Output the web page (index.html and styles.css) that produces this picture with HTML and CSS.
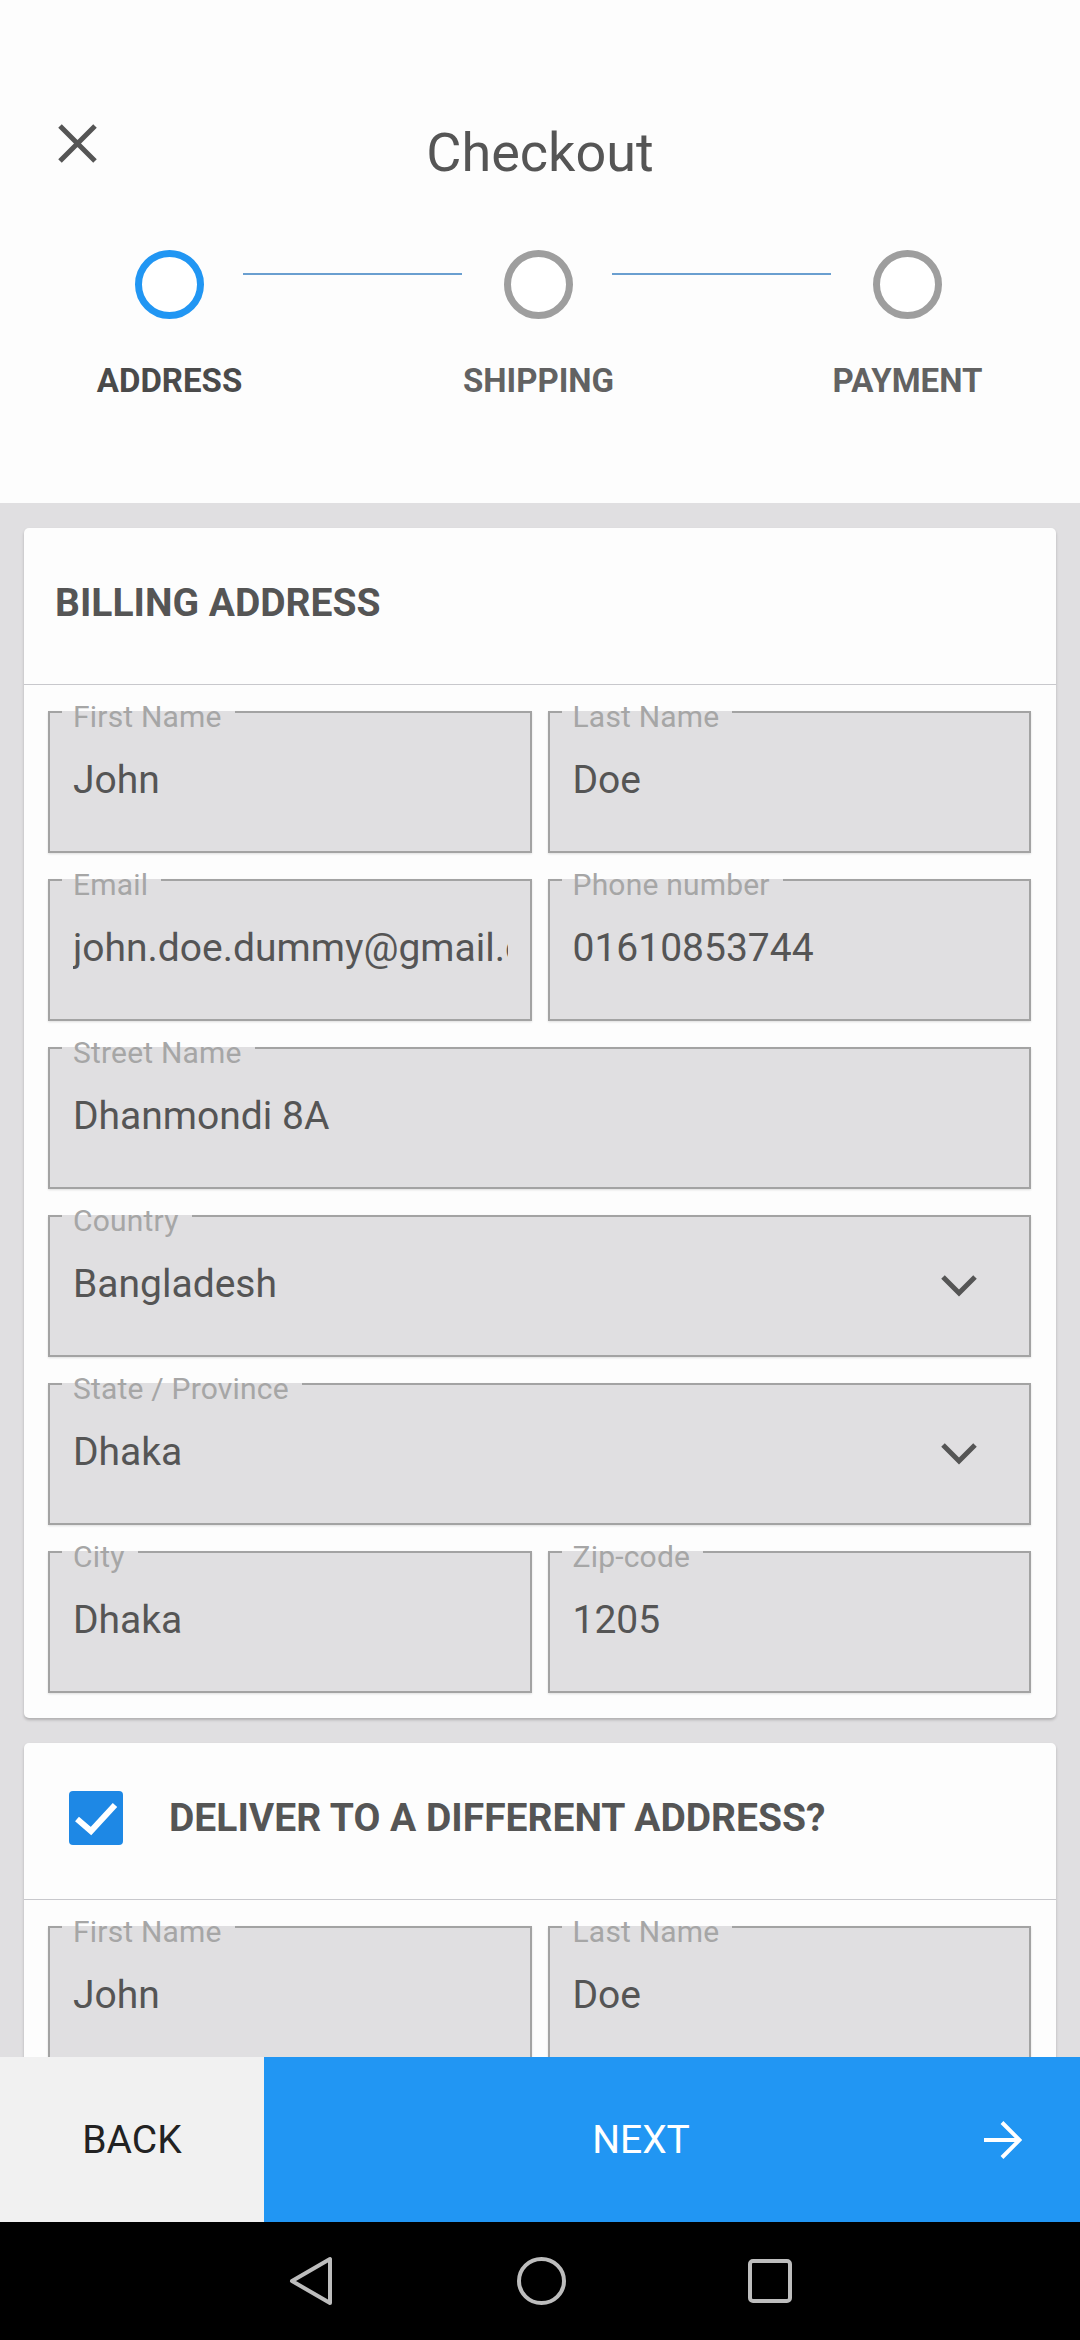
FILE: index.html
```html
<!DOCTYPE html>
<html lang="en">
<head>
<meta charset="utf-8">
<title>Checkout</title>
<link rel="stylesheet" href="styles.css">
</head>
<body>
<div class="screen">
  <header class="top">
    <div class="titlebar">
      <button class="close" aria-label="Close">
        <svg width="41" height="41" viewBox="0 0 41 41"><path d="M3 3 L38 38 M38 3 L3 38" stroke="#555" stroke-width="5" fill="none"/></svg>
      </button>
      <h1 class="title">Checkout</h1>
      <span></span>
    </div>
    <div class="stepper">
      <div class="step active"><span class="dot"></span><span class="step-label">Address</span></div>
      <span class="connector"></span>
      <div class="step"><span class="dot"></span><span class="step-label">Shipping</span></div>
      <span class="connector"></span>
      <div class="step"><span class="dot"></span><span class="step-label">Payment</span></div>
    </div>
  </header>

  <main class="scroll">
    <section class="card">
      <div class="card-head"><h2 class="card-title">Billing Address</h2></div>
      <div class="fields">
        <div class="field"><span class="flabel">First Name</span><span class="fvalue">John</span></div>
        <div class="field"><span class="flabel">Last Name</span><span class="fvalue">Doe</span></div>
        <div class="field"><span class="flabel">Email</span><span class="fvalue clip">john.doe.dummy@gmail.com</span></div>
        <div class="field"><span class="flabel">Phone number</span><span class="fvalue">01610853744</span></div>
        <div class="field wide"><span class="flabel">Street Name</span><span class="fvalue">Dhanmondi 8A</span></div>
        <div class="field wide select"><span class="flabel">Country</span><span class="fvalue">Bangladesh</span>
          <svg class="chev" width="40" height="26" viewBox="0 0 40 26"><path d="M4 4 L20 20 L36 4" stroke="#555" stroke-width="5" fill="none"/></svg></div>
        <div class="field wide select"><span class="flabel">State / Province</span><span class="fvalue">Dhaka</span>
          <svg class="chev" width="40" height="26" viewBox="0 0 40 26"><path d="M4 4 L20 20 L36 4" stroke="#555" stroke-width="5" fill="none"/></svg></div>
        <div class="field"><span class="flabel">City</span><span class="fvalue">Dhaka</span></div>
        <div class="field"><span class="flabel">Zip-code</span><span class="fvalue">1205</span></div>
      </div>
    </section>

    <section class="card">
      <div class="card-head">
        <span class="check"><svg width="54" height="54" viewBox="0 0 54 54"><path d="M8 28 L22 40 L46 14" stroke="#fff" stroke-width="6" fill="none"/></svg></span>
        <h2 class="card-title">Deliver to a different address?</h2>
      </div>
      <div class="fields">
        <div class="field"><span class="flabel">First Name</span><span class="fvalue">John</span></div>
        <div class="field"><span class="flabel">Last Name</span><span class="fvalue">Doe</span></div>
      </div>
    </section>
  </main>

  <div class="actions">
    <button class="back">Back</button>
    <button class="next"><span class="next-text">Next</span>
      <svg width="40" height="40" viewBox="0 0 40 40"><path d="M2 20 H37 M20 2.5 L37.5 20 L20 37.5" stroke="#fff" stroke-width="4" fill="none"/></svg>
    </button>
  </div>

  <nav class="sysnav">
    <svg class="nav-back" width="44" height="50" viewBox="0 0 44 50"><path d="M3 25 L41 3 L41 47 Z" stroke="#bdbdbd" stroke-width="4" stroke-linejoin="round" fill="none"/></svg>
    <svg class="nav-home" width="49" height="48" viewBox="0 0 49 48"><ellipse cx="24.5" cy="24" rx="22.5" ry="22" stroke="#bdbdbd" stroke-width="4" fill="none"/></svg>
    <svg class="nav-recent" width="44" height="44" viewBox="0 0 44 44"><rect x="2" y="2" width="40" height="40" rx="3" stroke="#bdbdbd" stroke-width="4" fill="none"/></svg>
  </nav>
</div>
</body>
</html>
```

FILE: styles.css
```css
html, body {
  margin: 0;
  padding: 0;
}
body {
  font-family: Roboto, "Noto Sans", "Liberation Sans", sans-serif;
  background: #000;
}
button {
  font-family: inherit;
  border: 0;
  margin: 0;
  cursor: pointer;
}
.screen {
  width: 1080px;
  height: 2340px;
  display: flex;
  flex-direction: column;
  overflow: hidden;
  background: #e0dfe1;
}

/* header */
.top {
  background: #fdfdfd;
  padding: 123px 0 106px;
}
.titlebar {
  display: grid;
  grid-template-columns: 1fr auto 1fr;
  align-items: start;
}
.close {
  justify-self: start;
  margin-left: 57px;
  padding: 0;
  width: 41px;
  height: 41px;
  background: transparent;
  display: block;
}
.close svg { display: block; }
.title {
  margin: 3px 0 0;
  font-size: 54px;
  line-height: 54px;
  font-weight: 400;
  color: #555;
}

.stepper {
  display: flex;
  align-items: flex-start;
  margin-top: 70px;
  padding-left: 135px;
}
.step {
  width: 69px;
  display: flex;
  flex-direction: column;
  align-items: center;
}
.dot {
  width: 69px;
  height: 69px;
  box-sizing: border-box;
  border: 7px solid #9e9e9e;
  border-radius: 50%;
  background: #fff;
}
.step.active .dot { border-color: #2196f3; }
.step-label {
  margin-top: 45px;
  font-size: 33px;
  line-height: 33px;
  font-weight: 700;
  text-transform: uppercase;
  white-space: nowrap;
  color: #626262;
}
.step.active .step-label { color: #4a4a4a; }
.connector {
  width: 219px;
  height: 2px;
  margin: 23px 42px 0 39px;
  background: #6a9fd0;
}

/* scroll area */
.scroll {
  flex: 1;
  min-height: 0;
  overflow: hidden;
  padding: 25px 24px 0;
  background: #e0dfe1;
}
.card {
  background: #fdfdfd;
  border-radius: 5px;
  box-shadow: 0 2px 3px rgba(0, 0, 0, 0.22);
  margin-bottom: 25px;
}
.card-head {
  height: 157px;
  box-sizing: border-box;
  padding: 0 0 6px 31px;
  display: flex;
  align-items: center;
  border-bottom: 1px solid #c8c8cc;
}
.card-title {
  margin: 0;
  font-size: 39px;
  line-height: 39px;
  font-weight: 700;
  text-transform: uppercase;
  color: #555;
}
.check {
  width: 54px;
  height: 54px;
  margin: 0 46px 0 14px;
  border-radius: 4px;
  background: #1e88e5;
  display: block;
}
.check svg { display: block; }

.fields {
  display: grid;
  grid-template-columns: 1fr 1fr;
  column-gap: 16px;
  row-gap: 26px;
  padding: 26px 25px 25px 24px;
}
.field {
  position: relative;
  height: 142px;
  box-sizing: border-box;
  border: 2px solid #a3a3a3;
  background: #e0dfe1;
  box-shadow: 0 1px 2px rgba(0, 0, 0, 0.12);
  display: flex;
  align-items: center;
  padding: 0 22px 4px 23px;
  min-width: 0;
}
.field.wide { grid-column: 1 / -1; }
.field.select { padding-right: 50px; }
.flabel {
  position: absolute;
  top: -11px;
  left: 12px;
  padding: 0 13px 0 11px;
  font-size: 30px;
  line-height: 30px;
  letter-spacing: 0.2px;
  color: #a6a6a6;
  white-space: nowrap;
  background: linear-gradient(#fdfdfd 0 9px, #e0dfe1 9px);
}
.fvalue {
  flex: 1;
  min-width: 0;
  white-space: nowrap;
  font-size: 39px;
  line-height: 50px;
  color: #555;
}
.fvalue.clip { overflow: hidden; }
.chev { display: block; flex: none; margin-top: 4px; }

/* bottom buttons */
.actions {
  height: 165px;
  display: flex;
  flex: none;
}
.back {
  width: 264px;
  background: #f1f1f1;
  color: #222;
  font-size: 39px;
  text-transform: uppercase;
  padding: 0;
}
.next {
  flex: 1;
  background: #2196f3;
  color: #fff;
  display: flex;
  align-items: center;
  padding: 0 58px 0 36px;
  font-size: 39px;
  text-transform: uppercase;
}
.next-text { flex: 1; text-align: center; }
.next svg { display: block; flex: none; }

/* system nav */
.sysnav {
  height: 118px;
  flex: none;
  background: #000;
  display: flex;
  align-items: center;
  justify-content: center;
}
.sysnav svg { display: block; }
.nav-home { margin: 0 182px 0 184px; }
```
